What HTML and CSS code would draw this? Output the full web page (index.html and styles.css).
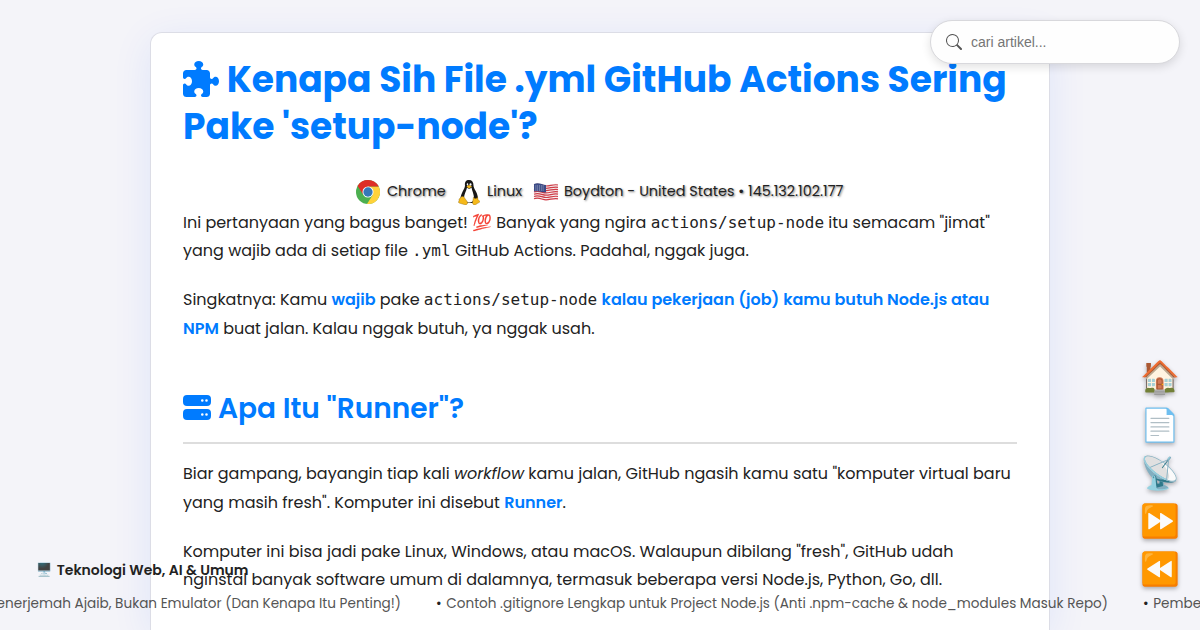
FILE: index.html
```html
<!DOCTYPE html>
<html lang="id">
<head>
<meta charset="utf-8">
<title>Kenapa Sih File .yml GitHub Actions Sering Pake 'setup-node'?</title>
<link rel="stylesheet" href="styles.css">
</head>
<body>
<main class="card">
  <h1 class="title">
    <span class="line"><svg class="puzzle" viewBox="0 0 512 512"><path d="M192 104.8c0-9.200-5.800-17.300-13.200-22.800C167.200 73.300 160 61.300 160 48c0-26.500 28.700-48 64-48s64 21.500 64 48c0 13.300-7.200 25.300-18.800 34c-7.400 5.500-13.200 13.600-13.200 22.800c0 12.800 10.400 23.200 23.200 23.200H336c26.500 0 48 21.500 48 48v56.800c0 12.800 10.400 23.200 23.200 23.200c9.200 0 17.300-5.800 22.800-13.200c8.700-11.600 20.700-18.800 34-18.800c26.500 0 48 28.700 48 64s-21.500 64-48 64c-13.300 0-25.300-7.200-34-18.800c-5.500-7.400-13.600-13.200-22.800-13.200c-12.800 0-23.200 10.400-23.200 23.200V464c0 26.500-21.500 48-48 48h-56.800c-12.800 0-23.200-10.400-23.200-23.200c0-9.200 5.800-17.300 13.200-22.800c11.600-8.700 18.800-20.700 18.800-34c0-26.500-28.700-48-64-48s-64 21.500-64 48c0 13.300 7.200 25.300 18.800 34c7.400 5.500 13.200 13.600 13.200 22.800c0 12.800-10.400 23.200-23.200 23.200H48c-26.500 0-48-21.500-48-48V343.200C0 330.400 10.400 320 23.200 320c9.200 0 17.300 5.800 22.800 13.200C54.700 344.800 66.700 352 80 352c26.500 0 48-28.700 48-64s-21.500-64-48-64c-13.300 0-25.300 7.200-34 18.800C40.500 250.200 32.400 256 23.200 256C10.400 256 0 245.600 0 232.800V176c0-26.500 21.500-48 48-48h120.800c12.800 0 23.200-10.400 23.200-23.200z"/></svg> <span>Kenapa Sih File .yml GitHub Actions Sering</span></span>
    <span class="line">Pake 'setup-node'?</span>
  </h1>
  <div class="visitor">
    <svg class="chrome" viewBox="0 0 48 48"><circle cx="24" cy="24" r="24" fill="#4caf50"/><path d="M24 13H45.300A24 24 0 0 1 22 48L34 29Z" fill="#ffd23a"/><path d="M3.200 12 14.500 29.500 24 13H45.300A24 24 0 0 0 3.200 12Z" fill="#de2f26"/><circle cx="24" cy="24" r="11" fill="#fff"/><circle cx="24" cy="24" r="9.300" fill="#3678b8"/></svg>
    <span class="v1">Chrome</span>
    <svg class="tux" viewBox="0 0 44 50"><path d="M14 11C13 4 16 0 22 0s9 4 9 11c0 7 8 13 9 25L33 46H12L5 37C6 25 14 18 14 11Z" fill="#171717"/><path d="M18 15c3 4 6 3 9 0 1 7 5 13 5 21 0 7-5 9-10 9s-10-3-10-9c0-8 5-14 6-21Z" fill="#fff"/><ellipse cx="19" cy="9" rx="1.500" ry="2.300" fill="#fff"/><ellipse cx="25" cy="9" rx="2" ry="2.500" fill="#fff"/><path d="m17 13 5-3 6 3-6 4Z" fill="#f5b91b"/><path d="m7 33 4 0 8 11c1 5-3 7-7 5L2 46c-3-1 1-4 0-7 0-3 4-2 5-6ZM31 34c2 4 6 4 8 0l1 5 4 4c0 2-5 3-8 6-4 2-7 0-7-4Z" fill="#f5b91b" stroke="#7a5b10" stroke-width=".7"/></svg>
    <span class="v2">Linux</span>
    <svg class="flag" viewBox="0 0 26 18"><path d="M1 1c5-2 8 1 12 1s8-2 12-1v15c-5-1-8 1-12 1s-7-2-12-1Z" fill="#f5eeee"/><path d="M1 2c5-2 8 1 12 1s8-2 12-1M1 4.300c5-2 8 1 12 1s8-2 12-1M1 6.600c5-2 8 1 12 1s8-2 12-1M1 8.900c5-2 8 1 12 1s8-2 12-1M1 11.200c5-2 8 1 12 1s8-2 12-1M1 13.500c5-2 8 1 12 1s8-2 12-1M1 15.800c5-2 8 1 12 1s8-2 12-1" fill="none" stroke="#cf3d48" stroke-width="1.200"/><path d="M1 1c5-2 8 1 12 1v7.500c-4 0-7-2-12-1Z" fill="#3b4b86"/><path d="M2.500 3h9M2.500 5h9M2.500 7h9" stroke="#fff" stroke-width=".7" stroke-dasharray=".8 1"/></svg>
    <span>Boydton - United States • 145.132.102.177</span>
  </div>
  <p class="para">
    <span class="line">Ini pertanyaan yang bagus banget! <span class="emoji">💯</span> Banyak yang ngira <code>actions/setup-node</code> itu semacam "jimat"</span>
    <span class="line">yang wajib ada di setiap file <code>.yml</code> GitHub Actions. Padahal, nggak juga.</span>
  </p>
  <p class="para">
    <span class="line">Singkatnya: Kamu <b>wajib</b> pake <code>actions/setup-node</code> <b>kalau pekerjaan (job) kamu butuh Node.js atau</b></span>
    <span class="line"><b>NPM</b> buat jalan. Kalau nggak butuh, ya nggak usah.</span>
  </p>
  <h2 class="subtitle"><svg class="server" viewBox="0 0 28 25"><path fill-rule="evenodd" d="M4 0H24a4 4 0 0 1 4 4V7a4 4 0 0 1-4 4H4a4 4 0 0 1-4-4V4a4 4 0 0 1 4-4ZM19.300 4.200a1.300 1.300 0 1 0 0 2.600 1.300 1.300 0 0 0 0-2.600ZM23.500 4.200a1.300 1.300 0 1 0 0 2.600 1.300 1.300 0 0 0 0-2.600ZM4 14H24a4 4 0 0 1 4 4V21a4 4 0 0 1-4 4H4a4 4 0 0 1-4-4V18a4 4 0 0 1 4-4ZM19.300 18.200a1.300 1.300 0 1 0 0 2.600 1.300 1.300 0 0 0 0-2.600ZM23.500 18.200a1.300 1.300 0 1 0 0 2.600 1.300 1.300 0 0 0 0-2.600Z"/></svg><span>Apa Itu "Runner"?</span></h2>
  <p class="para">
    <span class="line">Biar gampang, bayangin tiap kali <i>workflow</i> kamu jalan, GitHub ngasih kamu satu "komputer virtual baru</span>
    <span class="line">yang masih fresh". Komputer ini disebut <b>Runner</b>.</span>
  </p>
  <p class="para">
    <span class="line">Komputer ini bisa jadi pake Linux, Windows, atau macOS. Walaupun dibilang "fresh", GitHub udah</span>
    <span class="line">nginstal banyak software umum di dalamnya, termasuk beberapa versi Node.js, Python, Go, dll.</span>
  </p>
</main>
<div class="search">
  <svg class="lens" viewBox="0 0 16 16"><path d="M11.742 10.344a6.500 6.500 0 1 0-1.397 1.398h-.001c.03.040.062.078.098.115l3.850 3.850a1 1 0 0 0 1.415-1.414l-3.850-3.850a1.007 1.007 0 0 0-.115-.1zM12 6.500a5.500 5.500 0 1 1-11 0 5.500 5.500 0 0 1 11 0z"/></svg>
  <span>cari artikel...</span>
</div>
<nav class="dock"><span>🏠</span><span>📄</span><span>📡</span><span>⏩</span><span>⏪</span></nav>
<div class="category"><span class="emoji">🖥️</span><span>Teknologi Web, AI &amp; Umum</span></div>
<div class="ticker">
  <span class="t1"><span>Penerjemah Ajaib, Bukan Emulator (Dan Kenapa Itu Penting!)</span></span>
  <span class="t2"><i class="dot">•</i> Contoh .gitignore Lengkap untuk Project Node.js (Anti .npm-cache &amp; node_modules Masuk Repo)</span>
  <span class="t3"><i class="dot">•</i> Pembelajaran</span>
</div>
</body>
</html>
```
FILE: styles.css
```css
* { box-sizing: border-box; }
html { overflow: hidden; }
body {
  margin: 0;
  height: 630px;
  overflow: hidden;
  position: relative;
  background: #f4f4f9;
  color: #222;
  font: 16px/28.8px Poppins, Inter, sans-serif;
}
.card {
  width: 900px;
  height: 598px;
  overflow: hidden;
  margin: 32px auto 0;
  padding: 23px 32px 0;
  background: #fff;
  border: 1px solid #dcdde6;
  border-bottom: 0;
  border-radius: 12px 12px 0 0;
  box-shadow: 0 8px 40px rgba(0, 80, 255, .09);
}
.line { display: block; white-space: nowrap; }
.title { margin: 0; font-size: 36px; line-height: 47px; font-weight: 700; color: #007bff; }
.puzzle { width: 36px; height: 36px; vertical-align: -4.500px; fill: currentColor; }
.visitor {
  display: flex;
  align-items: center;
  height: 26px;
  margin: 29px 0 3.700px 173px;
  font-size: 14.400px;
  line-height: 24px;
  font-weight: 400;
  white-space: nowrap;
  text-shadow: 1px 1px 2px rgba(0, 0, 0, .5);
}
.visitor span { padding-bottom: 2px; }
.chrome { width: 24px; height: 24px; margin-right: 7px; }
.tux { width: 22px; height: 25px; margin-right: 7px; }
.flag { width: 26px; height: 18px; margin-right: 5px; }
.v1 { width: 71px; }
.v2 { width: 46px; }
.para { margin: 0 0 20px; }
code { font: 16px "DejaVu Sans Mono", monospace; }
b { color: #007bff; font-weight: 600; }
.emoji { font-family: "Noto Color Emoji", sans-serif; }
.subtitle {
  display: flex;
  align-items: center;
  gap: 7px;
  height: 56px;
  margin: 44px 0 16.100px;
  padding-bottom: 11px;
  border-bottom: 2px solid #ddd;
  font-size: 28px;
  font-weight: 600;
  color: #007bff;
}
.server { width: 28px; height: 25px; margin-bottom: 3px; fill: currentColor; }
.search {
  position: absolute;
  top: 20px;
  left: 930px;
  width: 250px;
  height: 44px;
  padding-left: 15px;
  display: flex;
  align-items: center;
  gap: 9px;
  border: 1px solid #d8d8dc;
  border-radius: 22px;
  background: #fefefe;
  box-shadow: 0 3px 10px rgba(0, 0, 0, .12);
  color: #757575;
  font: 14px "Liberation Sans", sans-serif;
}
.lens { width: 16px; height: 16px; fill: #555; }
.dock {
  position: absolute;
  left: 1140px;
  top: 353px;
  display: flex;
  flex-direction: column;
  font: 32px/48px "Noto Color Emoji", sans-serif;
  filter: drop-shadow(0 2px 2px rgba(0, 0, 0, .3));
}
.category {
  position: absolute;
  left: 36px;
  top: 556px;
  display: flex;
  gap: 4.500px;
  font-size: 14px;
  font-weight: 600;
  white-space: nowrap;
}
.category .emoji { font-size: 13px; }
.ticker {
  position: absolute;
  left: 0;
  top: 590px;
  width: 1200px;
  overflow: hidden;
  display: flex;
  font-size: 13.600px;
  color: #555;
  white-space: nowrap;
}
.dot { font-style: normal; color: #222; margin-right: 1px; }
.t1 { flex: 0 0 436px; min-width: 0; width: 436px; display: flex; justify-content: flex-end; padding-right: 35px; }
.t1 span { flex: none; }
.t2 { flex: 0 0 707px; }
```
